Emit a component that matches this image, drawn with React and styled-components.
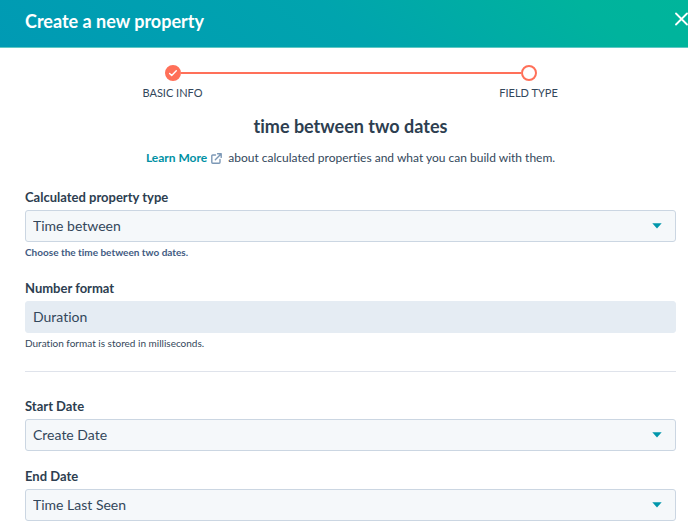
import React, { useState } from 'react';
import styled, { createGlobalStyle } from 'styled-components';

const GlobalStyle = createGlobalStyle`
  * {
    box-sizing: border-box;
  }

  body {
    margin: 0;
    background: #ffffff;
    color: #33475b;
    font-family: Lato, 'Open Sans', sans-serif;
    font-size: 12px;
    font-variant-ligatures: none;
    line-height: 16px;
  }

  input,
  select {
    font-family: inherit;
    font-variant-ligatures: none;
  }
`;

const Header = styled.header`
  display: flex;
  align-items: center;
  justify-content: space-between;
  height: 48px;
  padding: 0 0 6px 25px;
  border-bottom: 1px solid #5fc8c4;
  background: linear-gradient(40deg, #009ab4 0%, #00a4ae 50%, #00b39d 85%, #00b59b 100%);
`;

const HeaderTitle = styled.h1`
  margin: 0;
  font-size: 18px;
  font-weight: 700;
  line-height: 24px;
  color: #ffffff;
`;

const CloseButton = styled.button`
  display: flex;
  align-items: center;
  padding: 0 0 4px;
  border: 0;
  background: transparent;
  color: #ffffff;
  cursor: pointer;
`;

const Main = styled.main`
  padding: 17px 12px 8px 25px;
`;

const Steps = styled.ol`
  display: flex;
  max-width: 412px;
  margin: 0 auto;
  padding: 0;
  list-style: none;
`;

const Step = styled.li`
  display: flex;
  flex: none;
  flex-direction: column;
  align-items: center;
  gap: 4px;
  width: 56px;
  font-size: 11px;
  text-transform: uppercase;
  white-space: nowrap;
`;

const StepDot = styled.span`
  display: flex;
  align-items: center;
  justify-content: center;
  width: 16px;
  height: 16px;
  border: 2px solid #ff7059;
  border-radius: 50%;
  background: ${({ $done }) => ($done ? '#ff7059' : '#ffffff')};
`;

const StepLine = styled.li`
  flex: 1;
  height: 2px;
  margin: 7px -20px 0;
  background: #ff7059;
`;

const Title = styled.h2`
  margin: 13px 0 0;
  font-size: 18px;
  font-weight: 700;
  line-height: 24px;
  color: #2d3e50;
  text-align: center;
`;

const Intro = styled.p`
  display: flex;
  flex-wrap: wrap;
  align-items: center;
  justify-content: center;
  gap: 6px;
  margin: 12px 0 0;
`;

const LearnLink = styled.a`
  display: flex;
  align-items: center;
  gap: 4px;
  font-weight: 700;
  color: #0091a4;
  text-decoration: none;

  &:hover {
    text-decoration: underline;
  }
`;

const Field = styled.div`
  margin-top: ${({ $gap }) => $gap}px;
`;

const Label = styled.label`
  display: block;
  margin-bottom: 5px;
  font-size: 13px;
  font-weight: 700;
  color: #2d3e50;
`;

const SelectBox = styled.div`
  position: relative;
`;

const Select = styled.select`
  display: block;
  width: 100%;
  height: 32px;
  padding: 0 32px 2px 7px;
  border: 1px solid #cbd6e2;
  border-radius: 3px;
  appearance: none;
  background: #f5f8fa;
  color: #33475b;
  font-size: 14px;
`;

const Caret = styled.svg`
  position: absolute;
  top: 13px;
  right: 14px;
  pointer-events: none;
`;

const Input = styled.input`
  display: block;
  width: 100%;
  height: 32px;
  padding: 0 7px 2px;
  border: 1px solid #e5ecf3;
  border-radius: 3px;
  background: #e5ecf3;
  color: #33475b;
  font-size: 14px;
`;

const Help = styled.p`
  margin: 2px 0 0;
  font-size: 10px;
  font-weight: ${({ $strong }) => ($strong ? 700 : 400)};
  color: ${({ $strong }) => ($strong ? '#425b82' : '#33475b')};
`;

const Divider = styled.hr`
  height: 1px;
  margin: 20px 0 0;
  border: 0;
  background: #dfe3eb;
`;

function SelectField({ id, label, options, help, gap }) {
  const [value, setValue] = useState(options[0]);

  return (
    <Field $gap={gap}>
      <Label htmlFor={id}>{label}</Label>
      <SelectBox>
        <Select id={id} value={value} onChange={(e) => setValue(e.target.value)}>
          {options.map((option) => (
            <option key={option}>{option}</option>
          ))}
        </Select>
        <Caret width='10' height='6' viewBox='0 0 10 6' aria-hidden='true'>
          <path d='M0.3 0.3h9.4L5 5.4z' fill='#0097ab' />
        </Caret>
      </SelectBox>
      {help && <Help $strong>{help}</Help>}
    </Field>
  );
}

function App() {
  return (
    <>
      <GlobalStyle />
      <Header>
        <HeaderTitle>Create a new property</HeaderTitle>
        <CloseButton type='button' aria-label='Close'>
          <svg width='14' height='14' viewBox='0 0 14 14' fill='none'>
            <path
              d='M2 1.5l11 11M13 1.5l-11 11'
              stroke='currentColor'
              strokeWidth='1.8'
              strokeLinecap='round'
            />
          </svg>
        </CloseButton>
      </Header>
      <Main>
        <Steps>
          <Step>
            <StepDot $done>
              <svg width='10' height='10' viewBox='0 0 10 10' fill='none'>
                <path
                  d='M1.6 5.4l2.1 2.1 4.6-4.8'
                  stroke='#ffffff'
                  strokeWidth='1.4'
                  strokeLinecap='round'
                  strokeLinejoin='round'
                />
              </svg>
            </StepDot>
            Basic info
          </Step>
          <StepLine aria-hidden='true' />
          <Step>
            <StepDot />
            Field type
          </Step>
        </Steps>

        <Title>time between two dates</Title>
        <Intro>
          <LearnLink href='#learn-more'>
            Learn More
            <svg width='11' height='11' viewBox='0 0 11 11' fill='none' aria-hidden='true'>
              <path
                d='M4.5 2H1.7a.9.9 0 0 0-.9.9v6.4c0 .5.4.9.9.9h6.4c.5 0 .9-.4.9-.9V6.5M6.6.8h3.6v3.6M10 1L4.3 6.7'
                stroke='#7c98b6'
                strokeWidth='1.4'
                strokeLinecap='round'
                strokeLinejoin='round'
              />
            </svg>
          </LearnLink>
          <span>about calculated properties and what you can build with them.</span>
        </Intro>

        <SelectField
          id='property-type'
          label='Calculated property type'
          options={['Time between']}
          help='Choose the time between two dates.'
          gap={23}
        />
        <Field $gap={20}>
          <Label htmlFor='number-format'>Number format</Label>
          <Input id='number-format' value='Duration' readOnly />
          <Help>Duration format is stored in milliseconds.</Help>
        </Field>

        <Divider />

        <SelectField id='start-date' label='Start Date' options={['Create Date']} gap={26} />
        <SelectField id='end-date' label='End Date' options={['Time Last Seen']} gap={17} />
      </Main>
    </>
  );
}

export default App;
